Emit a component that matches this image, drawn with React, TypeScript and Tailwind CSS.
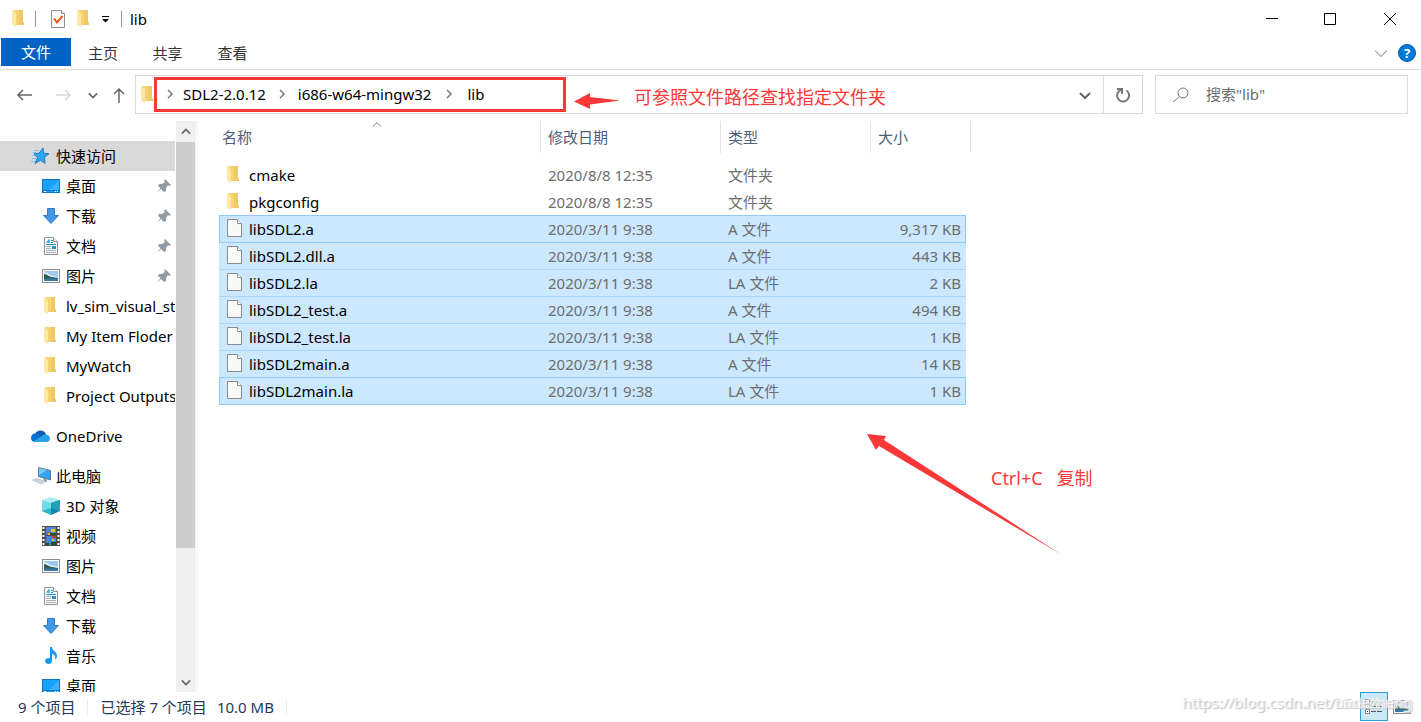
import { ReactNode } from "react";

type IconProps = { className?: string };

function FolderIcon({ className = "" }: IconProps) {
    return (
        <svg className={className} width="14" height="18" viewBox="0 0 14 18">
            <path d="M3 0h9v12l1 1v2H3z" fill="#f5d276" />
            <path d="M8 0h4v12l1 1v2H8z" fill="#efc964" />
            <path d="M1 1l4 2v14l-4-2z" fill="#ffe8a3" />
            <path d="M1 1l2-1 2 3v1z" fill="#f9dc8b" />
        </svg>
    );
}

function FileIcon() {
    return (
        <svg width="16" height="20" viewBox="0 0 16 20">
            <path d="M.5.5h10l4 4v13H.5z" fill="#f9f9f9" stroke="#8a8a8a" />
            <path d="M10.500.5v4h4" fill="#fff" stroke="#8a8a8a" />
        </svg>
    );
}

function PropertiesIcon() {
    return (
        <svg width="16" height="20" viewBox="0 0 16 20">
            <path d="M1.500 1.500h10l3 3v14h-13z" fill="#fafafa" stroke="#8f8f8f" />
            <path d="M11.500 1.500v3h3" fill="#fff" stroke="#8f8f8f" />
            <path d="M4 9.500l3 4 5.500-6.500" fill="none" stroke="#e8591c" strokeWidth="2" />
        </svg>
    );
}

function StarIcon() {
    return (
        <svg width="20" height="18" viewBox="0 0 20 18">
            <path d="M13 1l.6 5.200 5.400.5-4.500 3.500.5 6.300-4.500-3.200-5.500 3.200 2.500-6-3.500-3.800 5.200-.5z" fill="#2ea3ee" stroke="#1b7fc8" />
            <path d="M4 3.500h5M3 5.500h3M2 8.500h3M2 11.500h4M1 14.500h4" stroke="#7cc4f2" />
        </svg>
    );
}

function DesktopIcon() {
    return (
        <svg width="18" height="14" viewBox="0 0 18 14">
            <rect x=".5" y=".5" width="17" height="13" fill="#18a0fb" stroke="#0a76c4" />
            <path d="M17 1v10L7 11z" fill="#3db1ff" />
            <path d="M1 11.500h16" stroke="#0a76c4" />
            <path d="M2 12.500h2M13 12.500h1M15 12.500h1" stroke="#fff" />
        </svg>
    );
}

function DownloadIcon() {
    return (
        <svg width="18" height="18" viewBox="0 0 18 18">
            <path d="M5.500 1.500h7v7h4L9 16.500 1.500 8.500h4z" fill="#3f97e6" stroke="#2b7cc9" />
        </svg>
    );
}

function DocumentIcon() {
    return (
        <svg width="18" height="18" viewBox="0 0 18 18">
            <path d="M2.500.5h9l4 4v13h-13z" fill="#fcfcfc" stroke="#8d9499" />
            <path d="M11.500.5v4h4" fill="#fff" stroke="#8d9499" />
            <path d="M4.500 6l2.500-3.500V6M5.500 5h2M9 3.500h2M9 5.500h2" fill="none" stroke="#1b8fd8" />
            <path d="M4 7.500h10" stroke="#1b8fd8" />
            <path d="M4 9.500h5M4 11.500h5M4 13.500h10M4 15.500h10" stroke="#a6afb5" />
            <path d="M10 9h4v3h-4z" fill="#2b8fbf" />
        </svg>
    );
}

function PictureIcon() {
    return (
        <svg width="18" height="14" viewBox="0 0 18 14">
            <rect x=".5" y=".5" width="17" height="13" fill="#fff" stroke="#8d8d8d" />
            <path d="M2 2h14v10H2z" fill="#9cc9f0" />
            <path d="M2 4c2-1 4 0 6 2l8 2v1H2z" fill="#e4f1fa" />
            <path d="M2 5c3 0 5 3 8 3l6 1v1H2z" fill="#2f5f52" />
            <path d="M2 9.500h14V12H2z" fill="#3b77a8" />
        </svg>
    );
}

function CloudIcon() {
    return (
        <svg width="20" height="14" viewBox="0 0 20 14">
            <path d="M5 5a6 6 0 0 1 11 0l-4 4z" fill="#0b5cad" />
            <path d="M4.500 13A4.300 4.300 0 0 1 5 4.500c2-.4 4 .4 5.500 2L14 10l-5 3z" fill="#0f6fd0" />
            <path d="M3 12.500L12 7c3-3 8-1 8 2.500 0 2-1.500 3.500-3.500 3.500h-12z" fill="#28a3ea" />
        </svg>
    );
}

function ComputerIcon() {
    return (
        <svg width="22" height="18" viewBox="0 0 22 18">
            <path d="M8.500.5l12 3v9.500l-12-3.500z" fill="#36a3f0" stroke="#5d7b92" />
            <path d="M9 1l8 2-8 5z" fill="#7cc8fa" />
            <path d="M13 11.500l4 1.200V15l-3-1z" fill="#8b98a2" />
            <path d="M2 13l5-1.500 9 3-5 2.500z" fill="#cdd3d8" stroke="#a9b2b9" strokeWidth=".5" />
        </svg>
    );
}

function CubeIcon() {
    return (
        <svg width="18" height="18" viewBox="0 0 18 18">
            <path d="M9 0l9 3-9 3-9-3z" fill="#a9eef3" />
            <path d="M0 3l9 3v12l-9-4z" fill="#6fdde6" />
            <path d="M18 3L9 6v12l9-4z" fill="#1389a8" />
            <path d="M9 6l9-3v11l-9-3z" fill="#1fa0ba" />
            <path d="M0 14l9-3v7z" fill="#2bb8cc" />
        </svg>
    );
}

function VideoIcon() {
    return (
        <svg width="18" height="20" viewBox="0 0 18 20">
            <path d="M0 0h18v20H0z" fill="#4b4b4b" />
            <path d="M4 1h10v8H4zM4 10h10v9H4z" fill="#4a86dd" />
            <path d="M9 3h4v3H9zM10 13h2v2h-2zM6 7h2v2H6z" fill="#e0c92b" />
            <path d="M10 10h4v2h-4zM5 6h2v1H5z" fill="#d3372c" />
            <path d="M8 7h6v2H8zM9 16h5v3H9zM4 17h3v2H4z" fill="#23502b" />
            <path d="M1.500 1v18M16.500 1v18" stroke="#fff" strokeWidth="2" strokeDasharray="2 2" />
        </svg>
    );
}

function MusicIcon() {
    return (
        <svg width="18" height="18" viewBox="0 0 18 18">
            <path d="M8 0h2c0 4 5 4 5 9 0 2-1 3-2 4 1-4-1-6-3-6v7a3.500 3 0 1 1-2-2.700z" fill="#0f9bf2" />
        </svg>
    );
}

function PinIcon() {
    return (
        <svg className="ml-auto mr-1 shrink-0" width="14" height="14" viewBox="0 0 14 14">
            <path d="M8 0l6 6-2 1-1-1-2 3 0 3-2 1-3-3-4 4 3.500-5L1 7l1-2h3l3-2-1-1z" fill="#8f9ba6" />
        </svg>
    );
}

function Chevron({ d, size = 12, color = "#666", width = 1.5 }: { d: string; size?: number; color?: string; width?: number }) {
    return (
        <svg width={size} height={size} viewBox="0 0 12 12" fill="none" stroke={color} strokeWidth={width}>
            <path d={d} />
        </svg>
    );
}

const DOWN = "M1 4l5 5 5-5";
const UP = "M1 8l5-5 5 5";
const RIGHT = "M4 2l4 4-4 4";

type Item = { label: string; icon: ReactNode; pinned?: boolean };

const quickAccess: Item[] = [
    { label: "桌面", icon: <DesktopIcon />, pinned: true },
    { label: "下载", icon: <DownloadIcon />, pinned: true },
    { label: "文档", icon: <DocumentIcon />, pinned: true },
    { label: "图片", icon: <PictureIcon />, pinned: true },
    { label: "lv_sim_visual_st", icon: <FolderIcon className="ml-px" /> },
    { label: "My Item Floder", icon: <FolderIcon className="ml-px" /> },
    { label: "MyWatch", icon: <FolderIcon className="ml-px" /> },
    { label: "Project Outputs", icon: <FolderIcon className="ml-px" /> },
];

const thisPc: Item[] = [
    { label: "3D 对象", icon: <CubeIcon /> },
    { label: "视频", icon: <VideoIcon /> },
    { label: "图片", icon: <PictureIcon /> },
    { label: "文档", icon: <DocumentIcon /> },
    { label: "下载", icon: <DownloadIcon /> },
    { label: "音乐", icon: <MusicIcon /> },
    { label: "桌面", icon: <DesktopIcon /> },
];

const files = [
    { name: "cmake", date: "2020/8/8 12:35", type: "文件夹", size: "" },
    { name: "pkgconfig", date: "2020/8/8 12:35", type: "文件夹", size: "" },
    { name: "libSDL2.a", date: "2020/3/11 9:38", type: "A 文件", size: "9,317 KB" },
    { name: "libSDL2.dll.a", date: "2020/3/11 9:38", type: "A 文件", size: "443 KB" },
    { name: "libSDL2.la", date: "2020/3/11 9:38", type: "LA 文件", size: "2 KB" },
    { name: "libSDL2_test.a", date: "2020/3/11 9:38", type: "A 文件", size: "494 KB" },
    { name: "libSDL2_test.la", date: "2020/3/11 9:38", type: "LA 文件", size: "1 KB" },
    { name: "libSDL2main.a", date: "2020/3/11 9:38", type: "A 文件", size: "14 KB" },
    { name: "libSDL2main.la", date: "2020/3/11 9:38", type: "LA 文件", size: "1 KB" },
];

function rowBorder(i: number) {
    if (i === 0) return "border-transparent";
    if (i === 1 || i === 2 || i > 6) return "border-[#8ecbfb]";
    return "border-[#a9d6f8]";
}

function TreeRoot({ label, icon, active }: { label: string; icon: ReactNode; active?: boolean }) {
    return (
        <button type="button" className={`flex h-[30px] w-full shrink-0 items-center pl-[30px] ${active ? "bg-[#d9d9d9]" : ""}`}>
            <span className="flex w-[26px] items-center">{icon}</span>
            {label}
        </button>
    );
}

function TreeItem({ label, icon, pinned }: Item) {
    return (
        <button type="button" className="flex h-[30px] w-full shrink-0 items-center overflow-hidden whitespace-nowrap pl-10">
            <span className="flex w-[26px] shrink-0 justify-start pl-[2px]">{icon}</span>
            {label}
            {pinned && <PinIcon />}
        </button>
    );
}

function TitleBar() {
    return (
        <div className="flex h-[38px] shrink-0 items-center pl-[11px]">
            <FolderIcon />
            <div className="ml-[10px] h-4 w-px bg-[#999]" />
            <button type="button" aria-label="属性" className="ml-[14px]"><PropertiesIcon /></button>
            <button type="button" aria-label="新建文件夹" className="ml-[10px]"><FolderIcon /></button>
            <button type="button" aria-label="自定义快速访问工具栏" className="ml-[11px]">
                <svg width="8" height="8" viewBox="0 0 8 8">
                    <path d="M1 1.500h7" stroke="#000" />
                    <path d="M1 4h7L4.500 7.500z" fill="#000" />
                </svg>
            </button>
            <div className="ml-3 h-4 w-px bg-[#999]" />
            <div className="ml-2 text-black">lib</div>
            <div className="ml-auto flex">
                <button type="button" aria-label="最小化" className="flex w-[58px] justify-center">
                    <svg width="12" height="12" viewBox="0 0 12 12" stroke="#000"><path d="M0 5.500h12" /></svg>
                </button>
                <button type="button" aria-label="最大化" className="flex w-[58px] justify-center">
                    <svg width="12" height="12" viewBox="0 0 12 12" stroke="#000" fill="none"><path d="M.5.5h11v11H.5z" /></svg>
                </button>
                <button type="button" aria-label="关闭" className="flex w-[62px] justify-center pr-px">
                    <svg width="12" height="12" viewBox="0 0 12 12" stroke="#000"><path d="M0 0l12 12M12 0L0 12" /></svg>
                </button>
            </div>
        </div>
    );
}

function Ribbon() {
    return (
        <div className="flex h-8 shrink-0 border-b border-[#dadbdc] pl-px text-[#333]">
            <button type="button" className="h-7 w-[70px] bg-[#0063c4] text-white">文件</button>
            <button type="button" className="h-[30px] w-16">主页</button>
            <button type="button" className="h-[30px] w-[65px]">共享</button>
            <button type="button" className="h-[30px] w-[65px]">查看</button>
            <div className="ml-auto flex h-[30px] items-center gap-[10px] pr-[5px]">
                <button type="button" aria-label="展开功能区"><Chevron d={DOWN} size={14} color="#a0a0a0" width={1} /></button>
                <button type="button" className="h-[18px] w-[18px] rounded-full border border-[#0a5cad] bg-[#0078d7] text-[13px] font-bold leading-4 text-white">?</button>
            </div>
        </div>
    );
}

function AddressBar() {
    return (
        <div className="flex h-[50px] shrink-0 items-center pl-4 pr-[13px] pb-px">
            <button type="button" aria-label="后退" className="w-[18px]">
                <svg width="17" height="14" viewBox="0 0 17 14" fill="none" stroke="#666" strokeWidth="1.5"><path d="M16 7H2M7 2L2 7l5 5" /></svg>
            </button>
            <button type="button" aria-label="前进" className="ml-[21px] w-[18px]">
                <svg width="17" height="14" viewBox="0 0 17 14" fill="none" stroke="#d8d8d8" strokeWidth="1.5"><path d="M1 7h14M10 2l5 5-5 5" /></svg>
            </button>
            <button type="button" aria-label="最近浏览的位置" className="ml-[15px]"><Chevron d={DOWN} size={10} width={2} /></button>
            <button type="button" aria-label="向上" className="ml-[15px]">
                <svg width="12" height="16" viewBox="0 0 12 16" fill="none" stroke="#666" strokeWidth="1.5"><path d="M6 16V2M1 7l5-5 5 5" /></svg>
            </button>
            <div className="ml-[10px] flex h-[39px] flex-1 items-center border border-[#d9d9d9]">
                <FolderIcon className="ml-1 shrink-0" />
                <nav className="flex h-[35px] w-[412px] shrink-0 items-center border-3 border-[#fb3838] pb-[2px] pl-[7px] text-black">
                    <Chevron d={RIGHT} color="#777" />
                    <a href="#sdl" className="ml-[7px]">SDL2-2.0.12</a>
                    <span className="mx-[10px]"><Chevron d={RIGHT} color="#777" /></span>
                    <a href="#mingw">i686-w64-mingw32</a>
                    <span className="mx-3"><Chevron d={RIGHT} color="#777" /></span>
                    <a href="#lib">lib</a>
                </nav>
                <svg className="ml-2 mt-3 shrink-0" width="46" height="18" viewBox="0 0 46 18">
                    <path d="M0 9.500L16 1v4l30 3.500-30 4V17z" fill="#fb3838" />
                </svg>
                <span className="ml-[14px] mt-1 whitespace-nowrap text-[18px] leading-6 text-[#fb3838]">可参照文件路径查找指定文件夹</span>
                <button type="button" aria-label="以前的位置" className="ml-auto flex w-[37px] justify-center"><Chevron d={DOWN} width={2} /></button>
                <button type="button" aria-label="刷新" className="flex h-full w-[39px] items-center justify-center border-l border-[#d9d9d9]">
                    <svg width="16" height="16" viewBox="0 0 16 16" fill="none" stroke="#777" strokeWidth="2">
                        <path d="M11.500 3.500a6 6 0 1 1-5-.8M2 2h5v5" />
                    </svg>
                </button>
            </div>
            <label className="ml-3 flex h-[39px] w-[253px] items-center border border-[#d9d9d9] pl-4">
                <svg width="18" height="18" viewBox="0 0 18 18" fill="none" stroke="#777"><circle cx="11" cy="7" r="5" /><path d="M7 11l-6 5" /></svg>
                <input aria-label="搜索" placeholder={'搜索"lib"'} className="ml-4 w-40 pb-[2px] outline-none placeholder:text-[#6d6d6d]" />
            </label>
        </div>
    );
}

function Sidebar() {
    return (
        <aside className="flex w-[198px] shrink-0 border-r border-[#f5f5f5] text-black">
            <div className="flex w-[176px] shrink-0 flex-col overflow-hidden pr-px pt-5">
                <TreeRoot label="快速访问" icon={<StarIcon />} active />
                {quickAccess.map((item) => <TreeItem key={item.label} {...item} />)}
                <div className="my-[10px]"><TreeRoot label="OneDrive" icon={<CloudIcon />} /></div>
                <TreeRoot label="此电脑" icon={<ComputerIcon />} />
                {thisPc.map((item) => <TreeItem key={item.label} {...item} />)}
            </div>
            <div className="flex w-5 flex-col bg-[#f0f0f0]">
                <button type="button" aria-label="向上滚动" className="flex h-[21px] w-[19px] shrink-0 items-center justify-center"><Chevron d={UP} size={10} width={2} /></button>
                <div className="h-[406px] w-[19px] bg-[#cdcdcd]" />
                <button type="button" aria-label="向下滚动" className="mt-auto flex h-[21px] w-[19px] shrink-0 items-center justify-center"><Chevron d={DOWN} size={10} width={2} /></button>
            </div>
        </aside>
    );
}

function FileList() {
    return (
        <table className="h-fit w-[752px] table-fixed border-separate border-spacing-0 text-left text-[#6d6d6d]">
            <colgroup>
                <col className="w-[322px]" />
                <col className="w-[180px]" />
                <col className="w-[150px]" />
                <col className="w-[95px]" />
                <col className="w-[5px]" />
            </colgroup>
            <thead className="text-[#4c607a]">
                <tr className="h-8">
                    <th className="relative border-r border-[#e5e5e5] pl-[3px] font-normal">
                        名称
                        <span className="absolute -top-px left-[153px]"><Chevron d={UP} size={10} width={1} /></span>
                    </th>
                    <th className="border-r border-[#e5e5e5] pl-[7px] font-normal">修改日期</th>
                    <th className="border-r border-[#e5e5e5] pl-[7px] font-normal">类型</th>
                    <th colSpan={2} className="border-r border-[#e5e5e5] pl-[7px] font-normal">大小</th>
                </tr>
            </thead>
            <tbody>
                <tr className="h-[9px]"><td colSpan={5} /></tr>
                {files.map((file, i) => {
                    const cell = `border-b ${rowBorder(i)} ${i > 1 ? "bg-[#cce8ff]" : ""}`;
                    const edge = i === 2 || i === 8;
                    return (
                        <tr key={file.name} className="h-[27px]">
                            <td className={`${cell} ${edge ? "border-l pl-[7px]" : "pl-2"}`}>
                                <div className="flex items-center text-black">
                                    <span className="w-[22px]">{i > 1 ? <FileIcon /> : <FolderIcon className="-ml-px" />}</span>
                                    {file.name}
                                </div>
                            </td>
                            <td className={`${cell} pl-[7px]`}>{file.date}</td>
                            <td className={`${cell} pl-[7px]`}>{file.type}</td>
                            <td className={`${cell} text-right ${edge ? "border-r pr-1" : "pr-[5px]"}`}>{file.size}</td>
                            <td />
                        </tr>
                    );
                })}
            </tbody>
        </table>
    );
}

function StatusBar() {
    return (
        <footer className="flex h-[30px] shrink-0 items-center pl-[18px] pr-[10px] pb-px text-[#1e395b]">
            <span>9 个项目</span>
            <div className="ml-3 mr-3 h-4 w-px bg-[#eee]" />
            <span>已选择 7 个项目</span>
            <span className="ml-[10px]">10.0 MB</span>
            <div className="ml-3 h-4 w-px bg-[#eee]" />
            <div className="relative ml-auto flex items-center">
                <button type="button" aria-label="详细信息" className="flex h-[29px] w-7 items-center justify-center border border-[#26a0da] bg-[#cbe8f6]">
                    <svg width="18" height="16" viewBox="0 0 18 16">
                        <path d="M.5.5h4v4h-4zM.5 5.500h4v4h-4zM.5 10.500h4v4h-4z" fill="#fff" stroke="#888" />
                        <path d="M6 2.500h5M12 2.500h5M6 7.500h5M12 7.500h5M6 12.500h5M12 12.500h5" stroke="#555" />
                        <path d="M2 2h1v1H2zM2 7h1v1H2z" fill="#2a6db0" />
                        <path d="M2 12h1v1H2z" fill="#c00" />
                    </svg>
                </button>
                <button type="button" aria-label="大缩略图" className="ml-[5px]"><PictureIcon /></button>
                {/* watermark, stamped twice */}
                <span className="absolute right-0 top-0 whitespace-nowrap text-white/70 [text-shadow:1px_1px_1px_#ccc]">https://blog.csdn.net/ISoaZheng</span>
                <span className="absolute right-[-2px] top-0 whitespace-nowrap text-white/70 [text-shadow:1px_1px_1px_#ccc]">https://blog.csdn.net/b6dezheng</span>
            </div>
        </footer>
    );
}

export default function App() {
    return (
        <div className="flex h-screen flex-col overflow-hidden bg-white font-['Noto_Sans','Noto_Sans_CJK_SC',sans-serif] text-[15px] leading-5">
            <TitleBar />
            <Ribbon />
            <AddressBar />
            <main className="flex min-h-0 flex-1 pt-px">
                <Sidebar />
                <div className="relative ml-[21px] flex-1">
                    <FileList />
                    {/* copy hint */}
                    <svg className="absolute left-[647px] top-[312px]" width="198" height="124" viewBox="0 0 198 124">
                        <path d="M1 1l19 2-2 4 178 115L13 13l-3 4z" fill="#fb3838" />
                    </svg>
                    <p className="absolute left-[772px] top-[345px] text-[18px] leading-6 text-[#fb3838]">
                        Ctrl+C<span className="ml-[14px]">复制</span>
                    </p>
                </div>
            </main>
            <StatusBar />
        </div>
    );
}
